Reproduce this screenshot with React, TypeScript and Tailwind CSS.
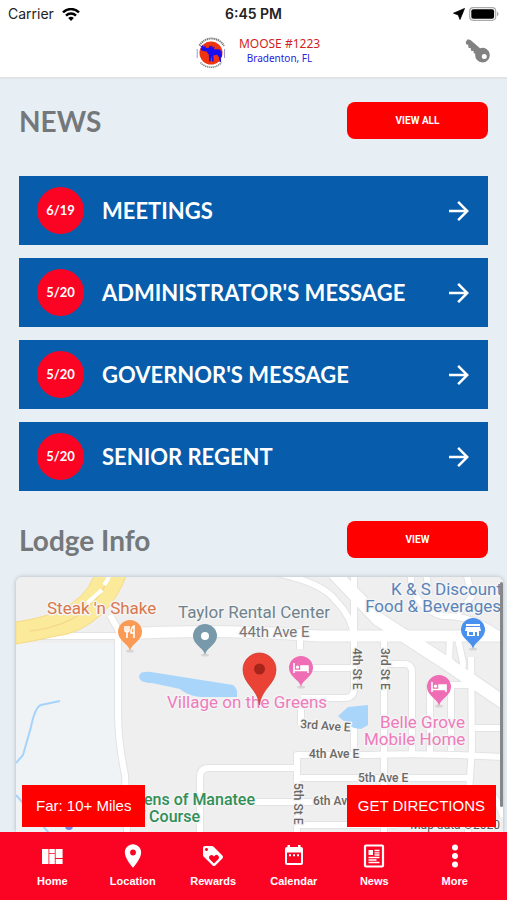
import { MdArrowForward, MdLoyalty, MdPlace } from 'react-icons/md';
import type { ReactNode } from 'react';

interface NewsItem {
  date: string;
  title: string;
}

const newsItems: NewsItem[] = [
  { date: '6/19', title: 'MEETINGS' },
  { date: '5/20', title: "ADMINISTRATOR'S MESSAGE" },
  { date: '5/20', title: "GOVERNOR'S MESSAGE" },
  { date: '5/20', title: 'SENIOR REGENT' },
];

function HomeIcon() {
  return (
    <svg viewBox="0 0 24 24" className="size-6" fill="currentColor" aria-hidden="true">
      <path d="M2 5h6.500v15H2zM9.300 5h5.500v4H9.300zM9.300 9.800h5.500V20H9.300zM15.600 5h7v9h-7zM15.600 15h7v5h-7z" />
    </svg>
  );
}

function CalendarIcon() {
  return (
    <svg viewBox="0 0 24 24" className="size-6" aria-hidden="true">
      <path
        fill="currentColor"
        fillRule="evenodd"
        d="M5.500 1h2.500v2h8V1h2.500v2h.5A2 2 0 0 1 21 5v14a2 2 0 0 1-2 2H5a2 2 0 0 1-2-2V5a2 2 0 0 1 2-2h.5zM5 8.500V19h14V8.500z"
      />
      <path fill="currentColor" d="M7 10.200h2v2H7zM11 10.200h2v2h-2zM15 10.200h2v2h-2z" />
    </svg>
  );
}

function NewsIcon() {
  return (
    <svg viewBox="0 0 24 24" className="size-6" fill="none" stroke="currentColor" aria-hidden="true">
      <rect x="3" y="1.500" width="18" height="21" rx="1" strokeWidth="2.200" />
      <path d="M6.500 6h4.500v5H6.500z" fill="currentColor" stroke="none" />
      <path d="M12.500 6.500h5M12.500 8.800h5M12.500 11h5M6.500 13.500h11M6.500 16h8M6.500 18.500h11" strokeWidth="1.300" />
    </svg>
  );
}

function MoreIcon() {
  return (
    <svg viewBox="0 0 24 24" className="size-6" fill="currentColor" aria-hidden="true">
      <circle cx="12" cy="3.500" r="3" />
      <circle cx="12" cy="12" r="3" />
      <circle cx="12" cy="20.500" r="3" />
    </svg>
  );
}

const tabs: { label: string; icon: ReactNode }[] = [
  { label: 'Home', icon: <HomeIcon /> },
  { label: 'Location', icon: <MdPlace className="size-7" /> },
  { label: 'Rewards', icon: <MdLoyalty className="size-6" /> },
  { label: 'Calendar', icon: <CalendarIcon /> },
  { label: 'News', icon: <NewsIcon /> },
  { label: 'More', icon: <MoreIcon /> },
];

function StatusBar() {
  return (
    <div className="grid h-7 grid-cols-3 items-center px-2 font-['Inter',sans-serif] text-sm text-[#222]">
      <div className="flex items-center gap-2">
        <span>Carrier</span>
        <svg viewBox="0 0 18 13" className="h-[13px] w-[18px]" fill="none" stroke="#000" aria-hidden="true">
          <path d="M1 4.300a11.500 11.500 0 0 1 16 0" strokeWidth="2.500" />
          <path d="M4 7.600a7.200 7.200 0 0 1 10 0" strokeWidth="2.500" />
          <path d="M9 13 6.200 10.100a4 4 0 0 1 5.600 0z" fill="#000" stroke="none" />
        </svg>
      </div>
      <span className="text-center font-semibold">6:45 PM</span>
      <div className="flex items-center justify-end gap-1">
        <svg viewBox="0 0 12 12" className="size-3" aria-hidden="true">
          <path d="M11.500.5 7 11.500 5.300 7 .5 5.200z" fill="#000" stroke="#000" strokeWidth=".8" strokeLinejoin="round" />
        </svg>
        <svg viewBox="0 0 30 14" className="h-3.5 w-[30px]" aria-hidden="true">
          <rect x=".7" y=".7" width="26" height="12.600" rx="3.500" fill="#fff" stroke="#aaa" strokeWidth="1.200" />
          <rect x="2.300" y="2.300" width="22.800" height="9.400" rx="2" fill="#000" />
          <path d="M28 4.800c2 .7 2 3.700 0 4.400z" fill="#aaa" />
        </svg>
      </div>
    </div>
  );
}

function LodgeLogo() {
  return (
    <svg viewBox="0 0 32 32" className="size-8" aria-hidden="true">
      <circle cx="16" cy="16" r="11.500" fill="#f03410" />
      <path d="M4.500 8.500A14 14 0 0 1 29 9" fill="none" stroke="#777" strokeWidth="2" strokeDasharray="1.300 .6" />
      <path d="M5.500 25.500a14 14 0 0 0 21 0" fill="none" stroke="#888" strokeWidth="1.600" strokeDasharray="1.300 .6" />
      <path d="M2.200 12v9M29.500 12v9" stroke="#9999e0" strokeWidth="1" />
      <path
        d="M4 8.500l2.500.8.800-1.300 1.300 2 1.900-1.400.3 2.300 3-.2 1-2.700 1 1.700 1.300-1.500.4 2.400 2.200-.8-.7 2.400h5l2.500 2 .5 5-1.200 1.300.3 4.500h-1.500l-.7-4.700-1.800-2.500-3.800.6.5 6h-1.700l-.7-5.500-.8 5.500h-1.500l-.3-7-2.300-2.900-4.500-.7-1.500-2 1.300-1.500z"
        fill="#1a0df0"
      />
    </svg>
  );
}

function Header() {
  return (
    <header className="h-[79px] border-b-2 border-[#e0e4e6] bg-white">
      <StatusBar />
      <div className="grid grid-cols-[1fr_auto_1fr] items-center px-4">
        <div className="col-start-2 flex h-[50px] items-center gap-3 pl-2">
          <LodgeLogo />
          <div className="pb-1 text-center font-['Noto_Sans',sans-serif] leading-[15px]">
            <p className="text-[12px] leading-[15px] text-[#cf1f1f]">MOOSE #1223</p>
            <p className="text-[10px] leading-[15px] text-[#2a22dd]">Bradenton, FL</p>
          </div>
        </div>
        <button type="button" aria-label="Sign in" className="justify-self-end pb-1">
          <svg viewBox="0 0 26 26" className="size-[26px]" aria-hidden="true">
            <path
              fill="#828282"
              fillRule="evenodd"
              d="M.8 3.800 2.800 1.300 5.500 2 15 10.300a7.300 7.300 0 1 1-4.700 5.500L8.800 15.300 8.500 13 6 12.800 5.800 10.300 3.500 9.800 3.200 7 1 6zM19.300 16a2.500 2.500 0 1 0 0 5 2.500 2.500 0 0 0 0-5z"
            />
          </svg>
        </button>
      </div>
    </header>
  );
}

function SectionHeader({ title, action }: { title: string; action: string }) {
  return (
    <div className="flex items-center justify-between">
      <h2 className="font-['Lato',sans-serif] text-[28px] leading-9 font-bold text-[#74787b]">{title}</h2>
      <button
        type="button"
        className="h-[37px] w-[141px] rounded-lg bg-[#ff0000] font-['Roboto',sans-serif] text-[10px] font-bold text-white"
      >
        {action}
      </button>
    </div>
  );
}

function NewsRow({ item }: { item: NewsItem }) {
  return (
    <button type="button" className="flex h-[69px] w-full items-center bg-[#075cac] px-[14px] text-left font-['Lato',sans-serif] font-bold text-white">
      <span className="ml-1 flex size-[47px] items-center justify-center rounded-full bg-[#fb0424] text-[13px]">
        {item.date}
      </span>
      <span className="ml-[18px] flex-1 text-[22px]">{item.title}</span>
      <MdArrowForward className="size-[30px]" />
    </button>
  );
}

function MapPin({ x, y, color, children }: { x: number; y: number; color: string; children: ReactNode }) {
  return (
    <g transform={`translate(${x} ${y})`}>
      <ellipse cx="0" cy="19" rx="4" ry="1.500" fill="#000" opacity=".1" />
      <path d="M0 19C-1 12-12 9-12 0a12 12 0 0 1 24 0C12 9 1 12 0 19z" fill={color} />
      {children}
    </g>
  );
}

function Bed() {
  return (
    <g fill="none" stroke="#fff" strokeWidth="1.600">
      <path d="M-7-5V5M-7 2.500H7V5M7 2.500V-2H0V2" />
      <path d="M0-2h7v4H0z" fill="#fff" stroke="none" />
      <circle cx="-3.500" cy="-.8" r="1.600" fill="#fff" stroke="none" />
    </g>
  );
}

function Roads() {
  return (
    <>
      <path d="M0 59h102M102 60v75q0 30 7 63l2 58M104 56l-10-18" />
      <path d="M284 57v15M285 91h50M285 121h45q8-1 8-9V60M285 128v20M338-5v66M250-6q56 10 70 30 16 16 18 36" />
      <path d="M368 57v199M368 87h22q6 1 6 8v81M414 176v-68h41M435 108v66M455 80l1 90-4 60v26M455 151h32M338 150v28" />
      <path d="M184 256v-56q0-9 9-9h88M281 256v-78h70q70-2 136 2M281 201h171M200 225h252M281 248h100" />
      <path d="M395-5v12q8 26 32 32 34 0 60 22M410-5l3 22M450-5l6 24-14 18M434 62l-1 20q14 18 14 4l-5-24M475 215q10 14 12 25" />
    </>
  );
}

function LodgeMap() {
  return (
    <svg
      viewBox="0 0 487 255"
      preserveAspectRatio="xMidYMid slice"
      className="block h-[255px] w-full font-['Roboto',sans-serif]"
      role="img"
      aria-label="Map of the lodge area"
    >
      <rect width="487" height="255" fill="#efefef" />
      <path d="M0 66h102v70q1 34 10 64v56H0z" fill="#eff3f6" />

      {/* road casing, then the white roads on top */}
      <g fill="none" stroke="#e2e3e4" strokeWidth="8" strokeLinejoin="round">
        <Roads />
        <path d="M102 57q100-6 200 2h185" strokeWidth="13" />
        <path d="M318-4l44 46 65 42 60 41" strokeWidth="15" />
      </g>
      <g fill="none" stroke="#fff" strokeWidth="6" strokeLinejoin="round">
        <Roads />
        <path d="M102 57q100-6 200 2h185" strokeWidth="11" />
        <path d="M318-4l44 46 65 42 60 41" strokeWidth="13" />
      </g>
      <path d="M0 45q28-4 44-12 26-12 34-34h32q-8 22-24 38-22 20-46 22-22 5-40 8z" fill="#fcea9b" stroke="#f5d987" />
      <path d="M14 54q34-4 54-20 18-14 25-35" fill="none" stroke="#f5d987" strokeWidth="1.500" />
      <path d="M71 26l15-13M88 8q4-5 5-9" fill="none" stroke="#fff" strokeWidth="4" />

      <path d="M0 186l7-8 8-28q4-20 10-22l19-4M0 218l33 38" fill="none" stroke="#a6d3fb" strokeWidth="2" />
      <circle cx="53" cy="249" r="4" fill="#7a7fe0" />
      <path d="M123 99q1-5 12-4l44 7 38 6q5 3 4 12h-36c-12-1-17-5-21-8l-28-6c-8 0-13-2-13-7z" fill="#a9d5fb" />
      <path d="M322 139l10-9 20-2v20l-7 4q-12-1-16-7z" fill="#a9d5fb" />

      <g stroke="#f4f4f4" strokeWidth="3" strokeLinejoin="round" paintOrder="stroke" fontSize="17">
        <text x="31" y="37" fill="#d9774e">Steak 'n Shake</text>
        <text x="162" y="41" fill="#70838c">Taylor Rental Center</text>
        <g fill="#5a83b8" textAnchor="end">
          <text x="486" y="18">K &amp; S Discount</text>
          <text x="485" y="35">Food &amp; Beverages</text>
        </g>
        <g fill="#ee7bbb">
          <text x="151" y="131">Village on the Greens</text>
          <text x="364" y="151">Belle Grove</text>
          <text x="348" y="168">Mobile Home</text>
        </g>
        <g fill="#318f58" fontSize="16" className="font-medium">
          <text x="239" y="228" textAnchor="end">Gardens of Manatee</text>
          <text x="184" y="245" textAnchor="end">Golf Course</text>
        </g>
        <text x="223" y="60" fill="#777" fontSize="15">44th Ave E</text>
        <g fill="#6b6865" fontSize="12" className="font-medium">
          <text x="284" y="151" transform="rotate(4 284 151)">3rd Ave E</text>
          <text x="293" y="181">4th Ave E</text>
          <text x="342" y="205">5th Ave E</text>
          <text x="297" y="228">6th Ave E</text>
          <text transform="translate(337 71) rotate(90)">4th St E</text>
          <text transform="translate(365 71) rotate(90)">3rd St E</text>
          <text transform="translate(278 206) rotate(90)">5th St E</text>
        </g>
        <text x="484" y="252" fill="#555" fontSize="12" textAnchor="end">Map data ©2020</text>
      </g>

      <MapPin x={114} y={55} color="#fa9a55">
        <path d="M-5-6v4q0 2 2 2v6M-1-6v4q0 2-2 2V-6M4 6V-6q-3 1-3 7h3" fill="none" stroke="#fff" strokeWidth="1.600" />
      </MapPin>
      <MapPin x={189} y={59} color="#7799aa">
        <circle r="4" fill="#fff" />
      </MapPin>
      <MapPin x={457} y={53} color="#4a90ee">
        <path d="M-7-6H7v2H-7zM-7-3H7l1 4H-8zM-6 1h12v5H-6z" fill="#fff" />
        <path d="M-4 2h4v3h-4zM2 2h2v4H2z" fill="#4a90ee" />
      </MapPin>
      <MapPin x={285} y={91} color="#ef6db4">
        <Bed />
      </MapPin>
      <MapPin x={423} y={110} color="#ef6db4">
        <Bed />
      </MapPin>
      <path
        d="M243.500 128c-1.500-16-16.500-21-16.500-35.500a16.500 16.500 0 0 1 33 0c0 14.500-15 19.500-16.500 35.500z"
        fill="#ea4335"
        stroke="#c5372c"
        strokeWidth=".7"
      />
      <circle cx="243.500" cy="92" r="5.500" fill="#a5251b" />
    </svg>
  );
}

function TabBar() {
  return (
    <nav className="sticky bottom-0 grid h-[68px] grid-cols-6 bg-[#fb0424] px-3 font-['Liberation_Sans',sans-serif] text-[11px] font-bold text-white">
      {tabs.map((tab) => (
        <a key={tab.label} href={`#${tab.label.toLowerCase()}`} className="flex flex-col items-center gap-1 pt-[10px]">
          <span className="flex h-7 items-center">{tab.icon}</span>
          <span className="leading-[14px]">{tab.label}</span>
        </a>
      ))}
    </nav>
  );
}

export default function App() {
  return (
    <div className="flex min-h-screen flex-col bg-[#e7eff5]">
      <Header />
      <main className="flex-1">
        <section className="px-[19px] pt-[23px]">
          <SectionHeader title="NEWS" action="VIEW ALL" />
          <div className="mt-[37px] flex flex-col gap-[13px]">
            {newsItems.map((item) => (
              <NewsRow key={item.title} item={item} />
            ))}
          </div>
        </section>

        <section className="pt-[30px]">
          <div className="px-[19px]">
            <SectionHeader title="Lodge Info" action="VIEW" />
          </div>
          <div className="relative mt-[19px] mr-1 ml-4 overflow-hidden rounded-t-md shadow-[0_0_4px_rgba(0,0,0,0.25)]">
            <LodgeMap />
            <span className="absolute bottom-[5px] left-1.5 bg-[#ff0000] px-[14px] py-[10px] font-['Liberation_Sans',sans-serif] text-[15px] leading-[22px] text-white">
              Far: 10+ Miles
            </span>
            <button
              type="button"
              className="absolute right-[7px] bottom-[5px] bg-[#ff0000] px-[11px] py-[10px] font-['Liberation_Sans',sans-serif] text-[15px] leading-[22px] text-white"
            >
              GET DIRECTIONS
            </button>
            <div className="absolute top-[5px] right-0 h-[225px] w-[3px] rounded-full bg-[#858789]" />
          </div>
        </section>
      </main>
      <TabBar />
    </div>
  );
}
